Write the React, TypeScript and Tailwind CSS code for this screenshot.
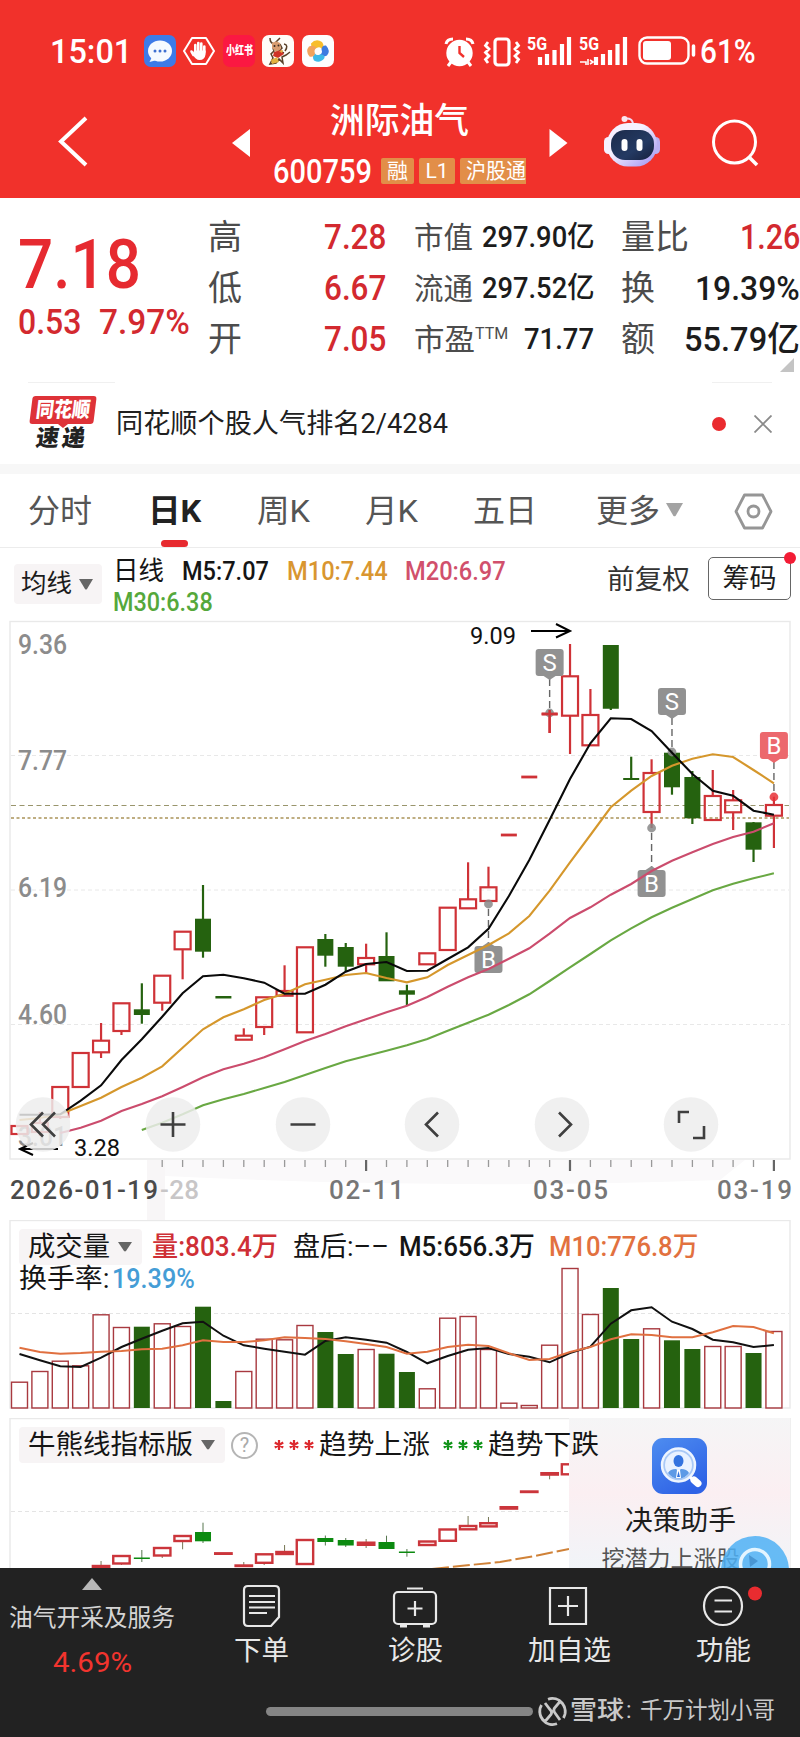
import React, { useLayoutEffect, useRef, useState } from "react";

/* Text squeezed or stretched horizontally to the width of its box. */
function Fit({ className = "", children }: { className?: string; children: React.ReactNode }) {
  const outer = useRef<HTMLSpanElement>(null);
  const inner = useRef<HTMLSpanElement>(null);
  const [k, setK] = useState(1);
  useLayoutEffect(() => {
    if (outer.current && inner.current) setK(outer.current.clientWidth / inner.current.offsetWidth);
  }, []);
  return (
    <span ref={outer} className={"block shrink-0 whitespace-nowrap " + className}>
      <span ref={inner} className="inline-block origin-left" style={{ transform: `scaleX(${k})` }}>
        {children}
      </span>
    </span>
  );
}

const X = (i: number) => 19.5 + 20.39 * i;
const line = (ys: number[], from = 0) => ys.map((y, i) => `${X(i + from).toFixed(1)},${y}`).join(" ");

type Candle = [i: number, color: "r" | "g", top: number, bottom: number, high?: number, low?: number];

const daily: Candle[] = [
  [0, "r", 1126, 1134], [1, "r", 1123, 1132, 1112, 1136], [2, "r", 1087, 1117, 1087, 1119], [3, "r", 1053, 1087],
  [4, "r", 1040.7, 1052.3, 1023, 1058], [5, "r", 1003.3, 1031, 1003, 1035], [6, "g", 1009.3, 1015, 983.3, 1023.7],
  [7, "r", 975.7, 1002.7, 975, 1010.7], [8, "r", 931.7, 949.3, 931, 979.3], [9, "g", 918.7, 951.7, 885, 957.7],
  [10, "g", 996, 998.5], [11, "r", 1035.7, 1039.7, 1028.3, 1040], [12, "r", 997.3, 1027, 997, 1035],
  [13, "r", 991, 995.7, 965.3, 996], [14, "r", 947.3, 1032.3], [15, "g", 939, 955.7, 934, 966.7],
  [16, "g", 947, 966.7, 943, 971.7], [17, "r", 958, 964.3, 943.7, 973], [18, "g", 956, 981.3, 932.3, 981],
  [19, "g", 990.3, 994.7, 984.7, 1005], [20, "r", 953.3, 964.3], [21, "r", 907.7, 950], [22, "r", 899.3, 908.3, 862.3, 908],
  [23, "r", 887.3, 901, 866.7, 901], [24, "r", 835, 835], [25, "r", 777, 777], [26, "r", 714, 714, 710, 733],
  [27, "r", 676.3, 715.7, 644, 754], [28, "r", 715, 745.3, 689, 745], [29, "g", 645, 708.7, 645, 710],
  [30, "g", 778, 780, 756.7, 779], [31, "r", 773, 812, 759.3, 828], [32, "g", 752.7, 787.3, 750, 794.7],
  [33, "g", 777, 818.3, 771, 824], [34, "r", 796, 820, 770, 820], [35, "r", 800.3, 812.3, 790, 830],
  [36, "g", 822.3, 849.7, 822, 862], [37, "r", 805, 815.7, 796.7, 848],
];

const ma5 = [1114.7, 1114.7, 1114.3, 1100.7, 1085.3, 1060, 1039.3, 1016.7, 993.3, 976.3, 974.7, 978.3, 982.7, 993.7, 993.7, 984.7, 971.7, 964, 962, 971, 970.7, 959, 947.3, 928.7, 896, 860, 820, 779, 743.3, 718.3, 719, 731, 752.7, 774, 790.7, 795.7, 810.7, 814.7];
const ma10 = [1120, 1118, 1114.3, 1106, 1097.7, 1087, 1077.7, 1066.3, 1047.7, 1029.3, 1017.3, 1009.3, 1000, 993.7, 984.3, 979.7, 975, 973, 978, 982.3, 977.3, 965, 955, 945, 933.3, 916, 890.7, 862.3, 835, 807.3, 790.7, 776, 765.7, 758.7, 754.3, 757, 770, 783.3];
const ma20 = [1133, 1127.7, 1120.7, 1111, 1104, 1096.3, 1087, 1077.3, 1069.3, 1063.7, 1057.3, 1049.3, 1041, 1034, 1026.3, 1019.3, 1012.3, 1005.7, 997, 986.7, 977.3, 969, 958.7, 948.3, 933.7, 918, 907.3, 894.7, 884, 871, 860.7, 852.3, 844, 837, 831.7, 823.3];
const ma30 = [1130, 1122.7, 1114.3, 1105.3, 1099.3, 1094, 1088, 1082, 1075, 1068, 1061.3, 1056, 1050.7, 1045.3, 1039, 1030.7, 1022.7, 1014.7, 1005, 994.3, 981, 967.3, 954, 940.3, 928.3, 917.3, 907.7, 899, 890.3, 883.7, 878.3, 873.3];

const volTop = [1381.7, 1371, 1360.7, 1365.3, 1314.3, 1327, 1326.7, 1323.3, 1326, 1306.7, 1401, 1371, 1338.7, 1339.3, 1325, 1332, 1354, 1349, 1353.7, 1372, 1388.3, 1317.7, 1316, 1349, 1402.7, 1405, 1344.7, 1268, 1314, 1288, 1339, 1328.3, 1340.3, 1349, 1346, 1346, 1353, 1331];
const volGreen = [6, 9, 10, 15, 16, 18, 19, 29, 30, 32, 33, 36];
const vol5 = [1354, 1360.3, 1366.3, 1367, 1357.7, 1347, 1338.7, 1330.7, 1323.3, 1321.7, 1335.7, 1345.3, 1348.7, 1351.7, 1354.7, 1341, 1337.3, 1339.7, 1342.7, 1352, 1363.3, 1356, 1349.7, 1348, 1354, 1356.7, 1362.3, 1353, 1346.7, 1323.7, 1310.3, 1307.3, 1321.7, 1329, 1339.7, 1342.3, 1347, 1345];
const vol10 = [1347.7, 1352, 1353.7, 1353, 1351.7, 1351, 1349.3, 1348.7, 1345.3, 1340.3, 1342, 1342, 1340.3, 1337.3, 1338, 1339, 1341.3, 1344, 1347, 1353.7, 1351.7, 1347, 1344.7, 1346, 1353.3, 1360, 1359, 1352, 1347, 1339.3, 1334.3, 1335, 1337.3, 1337.3, 1332.3, 1326, 1327, 1333.3];

const trend: Candle[] = [
  [4, "r", 1566, 1568, 1561, 1568], [5, "r", 1556, 1563.5, 1555, 1565], [6, "g", 1557.5, 1559, 1550, 1562],
  [7, "r", 1548, 1555.5, 1547, 1558], [8, "r", 1536, 1541, 1536, 1549.3], [9, "g", 1532, 1541.3, 1522.7, 1543],
  [10, "r", 1553.3, 1553.3], [11, "r", 1565.5, 1566, 1562, 1566], [12, "r", 1554.3, 1562.8, 1554, 1565],
  [13, "r", 1552, 1554, 1545, 1554], [14, "r", 1540, 1564], [15, "g", 1538, 1542, 1535.5, 1545.5],
  [16, "g", 1540, 1545.5, 1538, 1547], [17, "r", 1542.7, 1544.8, 1539, 1548], [18, "g", 1542, 1549, 1535.7, 1549],
  [19, "g", 1551.5, 1553, 1549, 1556.7], [20, "r", 1541.5, 1545], [21, "r", 1529.5, 1540.8], [22, "r", 1526, 1529.3, 1516, 1529],
  [23, "r", 1523.2, 1526.4, 1517, 1526], [24, "r", 1507.2, 1508.6], [25, "r", 1491.5, 1491.8], [26, "r", 1473.2, 1474.6, 1473, 1479.3],
  [27, "r", 1464.3, 1474.3],
];

function Candles({ data }: { data: Candle[] }) {
  return (
    <g strokeWidth="2.2">
      {data.map(([i, c, t, b, h, l]) => {
        const x = X(i);
        if (c === "g")
          return (
            <g key={i} stroke="#25620f" fill="#25620f">
              {h !== undefined && <path d={`M${x} ${h}V${l}`} />}
              <path stroke="none" d={`M${x - 8} ${t}H${x + 8}V${b}H${x - 8}Z`} />
            </g>
          );
        return (
          <g key={i} stroke="#cf3237" fill="none">
            {h !== undefined && h < t && <path d={`M${x} ${h}V${t}`} />}
            {l !== undefined && l > b && <path d={`M${x} ${b}V${l}`} />}
            {b - t < 1 ? <path d={`M${x - 8} ${t}H${x + 8}`} strokeWidth="2.8" /> : <rect x={x - 8} y={t} width="16" height={b - t} />}
          </g>
        );
      })}
    </g>
  );
}

function Marker({ i, y, label, dot, red }: { i: number; y: number; label: string; dot: number; red?: boolean }) {
  const x = X(i);
  const up = dot < y;
  return (
    <g>
      <path d={up ? `M${x} ${dot + 5}V${y - 2}` : `M${x} ${y + 30}V${dot - 2}`} stroke="#666" strokeWidth="1.4" strokeDasharray="7 4" />
      <circle cx={x} cy={dot} r="4.4" fill={red ? "#e83338" : "#888"} opacity="0.85" />
      <rect x={x - 14} y={y} width="28" height="27" rx="3" fill={red ? "#ec686d" : "#919191"} />
      <path d={up ? `M${x - 6} ${y}L${x} ${y - 4}L${x + 6} ${y}Z` : `M${x - 6} ${y + 27}L${x} ${y + 31}L${x + 6} ${y + 27}Z`} fill={red ? "#ec686d" : "#919191"} />
      <text x={x} y={y + 22} fontSize="24" fill="#fff" textAnchor="middle">{label}</text>
    </g>
  );
}

function KChart() {
  return (
    <svg className="block h-[600px] w-full shrink-0" viewBox="0 620 800 600" fill="none">
      <path d="M147 1160h18v60h-18z" fill="#f8f6f7" />
      <path d="M165 1160H745L720 1180Q450 1190 165 1176Z" fill="#faf9fa" />
      <rect x="10" y="621.5" width="780" height="537.5" stroke="#e9e9e9" strokeWidth="1.4" />
      <path d="M11 755.5H789M11 890H789M11 1024.5H789" stroke="#e8e8e8" strokeDasharray="4 3" />
      <path d="M11 805.5H789" stroke="#99956c" strokeWidth="1.2" strokeDasharray="5 3.5" />
      <path d="M11 818H789" stroke="#ab945a" strokeWidth="1.6" strokeDasharray="3 2.5" />
      <g fontSize="27" fill="#8c8c8c" fontWeight="500">
        <text x="18" y="654" textLength="49" lengthAdjust="spacingAndGlyphs">9.36</text>
        <text x="18" y="770" textLength="49" lengthAdjust="spacingAndGlyphs">7.77</text>
        <text x="18" y="897" textLength="49" lengthAdjust="spacingAndGlyphs">6.19</text>
        <text x="18" y="1024" textLength="49" lengthAdjust="spacingAndGlyphs">4.60</text>
        <text x="18" y="1146" textLength="49" lengthAdjust="spacingAndGlyphs">3.01</text>
      </g>
      <Candles data={daily} />
      <Marker i={26} y={649} label="S" dot={713} />
      <Marker i={32} y={688} label="S" dot={752} />
      <Marker i={23} y={946} label="B" dot={904} />
      <Marker i={31} y={870} label="B" dot={828} />
      <Marker i={37} y={732} label="B" dot={797} red />
      <path d={`M${X(26) - 8} 714H${X(26) + 8}M${X(26)} 710V733`} stroke="#cf3237" strokeWidth="2.4" />
      <g strokeWidth="2.1">
        <polyline points={line(ma30, 6)} stroke="#69a843" />
        <polyline points={line(ma20, 2)} stroke="#cb4c6d" />
        <polyline points={line(ma10)} stroke="#d5972c" />
        <polyline points={line(ma5)} stroke="#0a0a0a" />
      </g>
      <path d="M531 631H568M556 624L570 631L556 637.5" stroke="#000" strokeWidth="2" />
      <path d="M58 1149H22M33 1143L20 1149L33 1155" stroke="#000" strokeWidth="2" />
      <g fontSize="24.5" fill="#111">
        <text x="470" y="644" textLength="46" lengthAdjust="spacingAndGlyphs">9.09</text>
        <text x="74" y="1156" textLength="46" lengthAdjust="spacingAndGlyphs">3.28</text>
      </g>
      {[43, 173, 303, 432, 562, 691].map((x) => (
        <circle key={x} cx={x} cy="1124.5" r="27.3" fill="#ededed" opacity="0.84" />
      ))}
      <g stroke="#3f3f3f" strokeWidth="2.6">
        <path d="M43 1112.5L31 1124.5L43 1136.5M55 1112.5L43 1124.5L55 1136.5" />
        <path d="M160.500 1124.500H185.500M173 1112V1137M290.500 1124.500H315.500" />
        <path d="M438 1112.500L426 1124.500L438 1136.500M559 1112.500L571 1124.500L559 1136.500" />
        <path d="M679 1123V1112H689M704 1126V1138H693" />
      </g>
      <path d={Array.from({ length: 31 }, (_, k) => `M${X(k + 7).toFixed(1)} 1160V1167`).join("")} stroke="#999" strokeWidth="1.3" />
      <path d={[17, 27, 37].map((k) => `M${X(k).toFixed(1)} 1160V1171`).join("")} stroke="#666" strokeWidth="2.2" />
      <g fontSize="26" fill="#777" fontWeight="500">
        <text x="10" y="1199" fill="#4a4a4a" textLength="148" lengthAdjust="spacing">2026-01-19</text>
        <text x="160" y="1199" fill="#c8c6c7" textLength="39" lengthAdjust="spacing">-28</text>
        <text x="329" y="1199" textLength="75" lengthAdjust="spacing">02-11</text>
        <text x="533" y="1199" textLength="75" lengthAdjust="spacing">03-05</text>
        <text x="717" y="1199" textLength="75" lengthAdjust="spacing">03-19</text>
      </g>
    </svg>
  );
}

function VolumeChart() {
  return (
    <svg className="absolute inset-0 h-full w-full" viewBox="0 1220 800 198" fill="none">
      <rect x="10" y="1220.500" width="780" height="187.500" stroke="#e9e9e9" strokeWidth="1.4" />
      <path d="M11 1313.500H789" stroke="#e4e4e4" strokeDasharray="4 3" />
      {volTop.map((t, i) =>
        volGreen.includes(i) ? (
          <rect key={i} x={X(i) - 8} y={t} width="16" height={1408 - t} fill="#25620f" />
        ) : (
          <rect key={i} x={X(i) - 8} y={t + 0.5} width="16" height={1407.5 - t} stroke="#a8393f" strokeWidth="1.4" />
        )
      )}
      <polyline points={line(vol5)} stroke="#111" strokeWidth="2" />
      <polyline points={line(vol10)} stroke="#e07040" strokeWidth="2" />
    </svg>
  );
}

function TrendChart() {
  return (
    <svg className="absolute inset-0 h-full w-full" viewBox="0 1418 800 150" fill="none">
      <path d="M10 1568V1418.500H790V1568" stroke="#e9e9e9" strokeWidth="1.4" />
      <path d="M11 1511.500H569" stroke="#e4e4e4" strokeDasharray="4 3" />
      <svg x="0" y="1418" width="569" height="150" viewBox="0 1418 569 150">
        {trend.map(([i, c, t, b, h, l]) => {
          const x = X(i);
          return (
            <g key={i}>
              {h !== undefined && c === "g" && <path d={`M${x} ${h}V${l}`} stroke="#56764f" />}
              {h !== undefined && c === "r" && <path d={`M${x} ${h}V${t}M${x} ${b}V${l}`} stroke="#775" />}
              {c === "g" ? (
                <rect x={x - 8} y={t} width="16" height={b - t} fill="#0c8a10" />
              ) : (
                <rect x={x - 8.2} y={t} width="16.400" height={Math.max(b - t, 0.5)} stroke="#cb353b" strokeWidth="2.4" />
              )}
            </g>
          );
        })}
        <path d="M432 1569L460 1566L500 1562L535 1556L569 1549" stroke="#d08238" strokeWidth="2" strokeDasharray="17 4" />
      </svg>
    </svg>
  );
}

function Down({ className }: { className: string }) {
  return (
    <svg className={"shrink-0 " + className} viewBox="0 0 14 11" preserveAspectRatio="none" fill="currentColor">
      <path d="M0 0H14L8 10Q7 11 6 10Z" />
    </svg>
  );
}

function StatusBar() {
  return (
    <div className="flex h-[102px] shrink-0 items-center text-white">
      <Fit className="ml-[50px] w-[82px] text-[34px] leading-[34px] font-medium">15:01</Fit>
      <svg className="ml-[12px] size-8 shrink-0" viewBox="0 0 32 32">
        <rect width="32" height="32" rx="7" fill="#3d7be8" />
        <ellipse cx="16" cy="16" rx="12" ry="10.500" fill="#f5faff" />
        <path d="M8 22L5.500 27L13 25Z" fill="#f5faff" />
        <g fill="#3d6fd0"><circle cx="11" cy="16" r="1.500" /><circle cx="16" cy="16" r="1.500" /><circle cx="21" cy="16" r="1.500" /></g>
      </svg>
      <svg className="ml-[7px] size-8 shrink-0" viewBox="0 0 32 32">
        <path d="M9 3H23L31 16L23 29H9L1 16Z" fill="none" stroke="#fff" strokeWidth="2" strokeLinejoin="round" />
        <g fill="none" stroke="#fff" strokeWidth="2.600" strokeLinecap="round"><path d="M12.300 17V10M15.300 16V8M18.300 16V8.500M21.300 17V11.500M10.500 20L8.500 16.500" /></g>
        <path d="M11 15.500H22.600V19Q22 25 16.500 25Q12.500 25 9.500 19Z" fill="#fff" />
      </svg>
      <div className="ml-2 flex size-8 shrink-0 items-center justify-center rounded-[7px] bg-[#fb1842]">
        <Fit className="w-[27px] text-[12px] leading-[14px] font-black">小红书</Fit>
      </div>
      <svg className="ml-[7px] size-8 shrink-0" viewBox="0 0 32 32">
        <rect width="32" height="32" rx="7" fill="#fffdf8" />
        <path d="M8 3Q8 8 12 9Q10 12 12 16L9 19L11 23L8 29L14 28L17 24L21 28L20 22L24 20L28 17M12 9Q16 5 18 3M18 9L20 13L17 16L22 18M22 9Q27 10 23 16" fill="none" stroke="#584027" strokeWidth="1.500" />
        <path d="M10 8Q14 5 18 8L19 14L14 17L10 13Z" fill="#d99d70" />
        <path d="M12 17L19 15L22 19L16 23L11 21Z" fill="#cf3328" />
        <path d="M9 25L15 22L17 27L10 29ZM17 16L21 15L20 18Z" fill="#e3b23f" />
        <g fill="#3b2c22"><circle cx="12.500" cy="11" r="1" /><circle cx="16.500" cy="10.500" r="1" /></g>
      </svg>
      <svg className="ml-2 size-8 shrink-0" viewBox="0 0 32 32">
        <rect width="32" height="32" rx="7" fill="#fdfdfd" />
        <path d="M9 8.500Q14 3 20 7Q23 11 20 14Q18 11 14.500 13Q9 14 9 8.500Z" fill="#f8bd2c" />
        <path d="M24 10.500Q29 16 25 20.500Q20 23 18 19.500Q21 18 19.500 14.500Q20 10 24 10.500Z" fill="#3d7be0" />
        <path d="M22.500 23Q18 29 12 25.500Q9.500 21 13 18.500Q14.500 21 18 19.500Q23 19 22.500 23Z" fill="#3db9e8" />
        <path d="M7.500 21.500Q3 16 7 11.500Q12 9.500 14.500 13Q11.500 14.500 13 18.500Q12 22.500 7.500 21.500Z" fill="#f2a35c" />
      </svg>
      <svg className="ml-[111px] h-[32px] w-[252px] shrink-0 overflow-visible" viewBox="445 35 252 32" fill="none" stroke="#fff">
        <circle cx="459.500" cy="53" r="12.200" fill="#fff" strokeWidth="2" />
        <path d="M446 44Q447 39 453 39M473 44Q472 39 466 39M451 62L448 66M468 62L471 66" strokeWidth="3" />
        <path d="M459.500 46V53L464 57" stroke="#f1312b" strokeWidth="2.400" />
        <rect x="495" y="39" width="14" height="26" rx="3" strokeWidth="3.200" />
        <path d="M488 42L485.500 45.500L489 49L485.500 52.500L489 56L485.500 59.500L488 63M516 42L518.500 45.500L515 49L518.500 52.500L515 56L518.500 59.500L516 63" strokeWidth="2.800" />
        <path d="M540 57V65M547 54V65M554.500 50V65M562 44V65M569 37V65M596 57V65M603 54V65M610 50V65M617.500 44V65M625 37V65" strokeWidth="4.200" />
        <path d="M580 62H586V65M588 59V65M590 60L593 62L590 64" strokeWidth="1.600" />
        <g stroke="none" fill="#fff" fontSize="18" fontWeight="700">
          <text x="527" y="50" textLength="20" lengthAdjust="spacingAndGlyphs">5G</text>
          <text x="579" y="50" textLength="20" lengthAdjust="spacingAndGlyphs">5G</text>
        </g>
        <rect x="639.500" y="37.500" width="49" height="26" rx="7.500" strokeWidth="2.400" />
        <rect x="643" y="41" width="28" height="19" rx="3" fill="#fff" stroke="none" />
        <path d="M693.500 46V55" strokeWidth="3.500" strokeLinecap="round" />
      </svg>
      <Fit className="ml-[3px] w-[56px] text-[34px] leading-[34px] font-medium">61%</Fit>
    </div>
  );
}

function Header() {
  return (
    <div className="flex h-[96px] shrink-0 items-start text-white">
      <svg className="mt-[13px] ml-[57px] h-[52px] w-[34px] shrink-0" viewBox="57 115 34 52" fill="none" stroke="#fff" strokeWidth="4">
        <path d="M86 118L61 141.500L86 165" />
      </svg>
      <svg className="mt-[27px] ml-[141px] h-7 w-[18px] shrink-0" viewBox="0 0 18 28" fill="#fff"><path d="M18 0V28L0 14Z" /></svg>
      <div className="ml-[23px] flex w-[256px] shrink-0 flex-col">
        <Fit className="ml-[57px] w-[139px] text-[35px] leading-[40px] font-medium">洲际油气</Fit>
        <div className="mt-[13px] flex h-[32px] items-center">
          <Fit className="w-[99px] text-[34px] leading-[34px] font-medium">600759</Fit>
          <span className="ml-[9px] flex h-[26px] w-[33px] items-center justify-center rounded-[2px] bg-[#e28e48] text-[21px] leading-[24px]">融</span>
          <span className="ml-[5px] flex h-[26px] w-[36px] items-center justify-center rounded-[2px] bg-[#e28e48] text-[21px] leading-[24px]">L1</span>
          <span className="ml-[5px] flex h-[26px] w-[66px] items-center overflow-hidden rounded-l-[2px] bg-[#e28e48] pl-[6px]">
            <Fit className="w-[60px] text-[21px] leading-[24px]">沪股通</Fit>
          </span>
        </div>
      </div>
      <svg className="mt-[27px] ml-[20px] h-7 w-[19px] shrink-0" viewBox="0 0 18 28" fill="#fff"><path d="M0 0V28L18 14Z" /></svg>
      <svg className="mt-[12px] ml-[34px] h-[56px] w-[60px] shrink-0" viewBox="602 114 60 56">
        <defs>
          <linearGradient id="shell" x1="0" y1="0" x2="1" y2="1"><stop offset="0.400" stopColor="#f6f1ff" /><stop offset="1" stopColor="#9b8df0" /></linearGradient>
          <linearGradient id="visor" x1="0" y1="0" x2="1" y2="1"><stop offset="0" stopColor="#1c2b4a" /><stop offset="0.600" stopColor="#243a63" /><stop offset="1" stopColor="#17203c" /></linearGradient>
        </defs>
        <path d="M624 119Q633 117 633 125" fill="none" stroke="#f0dcf5" strokeWidth="2" />
        <circle cx="624.500" cy="119" r="3" fill="#fbe6f0" />
        <rect x="604" y="137" width="9" height="17" rx="4.500" fill="#f6f1ff" />
        <rect x="651" y="137" width="9" height="17" rx="4.500" fill="#b9b0f4" />
        <rect x="607" y="123" width="50" height="43.500" rx="21" fill="url(#shell)" />
        <rect x="611" y="130" width="43" height="30" rx="14" fill="url(#visor)" />
        <rect x="621.500" y="139" width="6" height="12" rx="3" fill="#fff" />
        <rect x="636.500" y="139" width="6" height="12" rx="3" fill="#fff" />
      </svg>
      <svg className="mt-[16px] ml-[48px] h-[50px] w-[50px] shrink-0" viewBox="710 118 50 50" fill="none" stroke="#fff" strokeWidth="3">
        <circle cx="734.500" cy="142" r="21" /><path d="M749 157L757 165" strokeWidth="3.500" />
      </svg>
    </div>
  );
}

const red = "text-[#d3292f] font-medium";

function Stats() {
  return (
    <div className="flex h-[184px] shrink-0 items-start pt-[14px] text-[#4c4c4c]">
      <div className="flex w-[208px] shrink-0 flex-col pl-[18px]">
        <Fit className="mt-[18px] w-[123px] text-[69px] leading-[70px] font-medium text-[#e62a30]">7.18</Fit>
        <div className={"mt-[4px] flex text-[34.5px] leading-[36px] " + red}>
          <Fit className="w-[63px]">0.53</Fit>
          <Fit className="ml-[18px] w-[91px]">7.97%</Fit>
        </div>
      </div>
      <div className="flex w-[178px] shrink-0 flex-col text-[34px] leading-[51px]">
        {[["高", "7.28"], ["低", "6.67"], ["开", "7.05"]].map(([k, v]) => (
          <div key={k} className="flex justify-between">
            <span>{k}</span>
            <Fit className={"w-[62px] text-[34.5px] " + red}>{v}</Fit>
          </div>
        ))}
      </div>
      <div className="ml-[28px] flex w-[180px] shrink-0 flex-col text-[30px] leading-[51px]">
        <div className="flex justify-between"><Fit className="w-[59px]">市值</Fit><Fit className="w-[112px] text-[29px] font-medium text-[#1c1c1c]">297.90亿</Fit></div>
        <div className="flex justify-between"><Fit className="w-[59px]">流通</Fit><Fit className="w-[112px] text-[29px] font-medium text-[#1c1c1c]">297.52亿</Fit></div>
        <div className="flex">
          <Fit className="w-[61px]">市盈</Fit>
          <Fit className="-mt-[6px] w-[33px] text-[16px]">TTM</Fit>
          <Fit className="ml-[16px] w-[70px] text-[29px] font-medium text-[#1c1c1c]">71.77</Fit>
        </div>
      </div>
      <div className="ml-[27px] flex w-[179px] shrink-0 flex-col text-[34px] leading-[51px]">
        <div className="flex justify-between"><span>量比</span><Fit className={"w-[60px] text-[34.5px] " + red}>1.26</Fit></div>
        <div className="flex justify-between"><span>换</span><Fit className="w-[105px] text-[34px] font-medium text-[#1c1c1c]">19.39%</Fit></div>
        <div className="flex justify-between"><span>额</span><Fit className="w-[116px] text-[34px] font-medium text-[#1c1c1c]">55.79亿</Fit></div>
        <svg className="-mt-[7px] mr-[6px] size-[14px] self-end" viewBox="0 0 14 14" fill="#c4c4c4"><path d="M14 0V14H0Z" /></svg>
      </div>
    </div>
  );
}

function News() {
  return (
    <div className="flex h-[82px] shrink-0 flex-col">
      <div className="flex h-px justify-between pr-[28px] pl-[28px]"><i className="w-[87px] bg-[#f0f0f0]" /><i className="w-[60px] bg-[#f0f0f0]" /></div>
      <div className="flex h-[81px] items-center">
        <div className="ml-[28px] flex h-[60px] w-[69px] shrink-0 flex-col items-center pt-[2px]">
          <div className="flex h-[28px] w-[64px] -skew-x-[7deg] items-center justify-center rounded-[3px] bg-[#de3238]">
            <Fit className="w-[54px] text-[21px] leading-[28px] font-black text-white">同花顺</Fit>
          </div>
          <svg className="h-[4px] w-[10px] shrink-0" viewBox="0 0 10 4" fill="#de3238"><path d="M0 0H10L5 4Z" /></svg>
          <div className="-ml-[4px] flex -skew-x-[8deg] gap-[3px] text-[23px] leading-[22px] font-black text-[#222]"><span>速</span><span>递</span></div>
        </div>
        <Fit className="ml-[19px] w-[332px] text-[27px] leading-[40px] text-[#202020]">同花顺个股人气排名2/4284</Fit>
        <i className="ml-[264px] size-[14px] shrink-0 rounded-full bg-[#ea2b2f]" />
        <svg className="ml-[28px] size-[18px] shrink-0" viewBox="0 0 18 18" stroke="#8a8a8a" strokeWidth="1.800"><path d="M0.500 0.500L17.500 17.500M17.500 0.500L0.500 17.500" /></svg>
      </div>
    </div>
  );
}

function Tabs() {
  return (
    <div className="flex h-[74px] shrink-0 border-b border-[#ececec] text-[32px] leading-[75px] text-[#555]">
      <Fit className="ml-[28px] w-[64px]">分时</Fit>
      <div className="ml-[55px] flex w-[54px] shrink-0 flex-col items-center">
        <Fit className="h-[66px] w-[53px] text-[32px] font-bold text-[#222]">日K</Fit>
        <i className="h-[7px] w-[27px] shrink-0 rounded-full bg-[#e72a2f]" />
      </div>
      <Fit className="ml-[56px] w-[53px]">周K</Fit>
      <Fit className="ml-[55px] w-[53px]">月K</Fit>
      <Fit className="ml-[55px] w-[64px]">五日</Fit>
      <Fit className="ml-[59px] w-[64px]">更多</Fit>
      <Down className="mt-[29px] ml-[6px] h-[14px] w-[17px] text-[#a3a3a3]" />
      <svg className="mt-[19px] ml-[51px] h-[37px] w-[39px] shrink-0" viewBox="0 0 39 37" fill="none" stroke="#969696" strokeWidth="2.800" strokeLinejoin="round">
        <path d="M10.500 2H28.500L37 18.500L28.500 35H10.500L2 18.500Z" /><circle cx="19.500" cy="18.500" r="5.500" />
      </svg>
    </div>
  );
}

function MaLegend() {
  return (
    <div className="flex h-[72px] shrink-0 items-start">
      <div className="mt-[16px] ml-[14px] flex h-[40px] w-[88px] shrink-0 items-center rounded-[4px] bg-[#f7f4f5] pl-[7px] text-[#1c1c1c]">
        <Fit className="w-[51px] text-[25px] leading-[38px]">均线</Fit>
        <Down className="ml-[7px] h-[11px] w-[14px] text-[#666]" />
      </div>
      <div className="ml-[11px] flex w-[494px] shrink-0 flex-col text-[26px] leading-[31px]">
        <div className="mt-[8px] flex">
          <Fit className="w-[51px] text-[#151515]">日线</Fit>
          <Fit className="ml-[18px] w-[87px] font-medium text-[#151515]">M5:7.07</Fit>
          <Fit className="ml-[18px] w-[101px] font-medium text-[#d99630]">M10:7.44</Fit>
          <Fit className="ml-[17px] w-[101px] font-medium text-[#d1506c]">M20:6.97</Fit>
        </div>
        <Fit className="w-[100px] font-medium text-[#55a83b]">M30:6.38</Fit>
      </div>
      <Fit className="mt-[12px] w-[83px] text-[27px] leading-[40px] text-[#333]">前复权</Fit>
      <div className="relative mt-[9px] ml-[18px] flex h-[43px] w-[83px] shrink-0 items-center justify-center rounded-[5px] border border-[#666] text-[#1c1c1c]">
        <Fit className="w-[54px] text-[27px] leading-[40px]">筹码</Fit>
        <i className="absolute -top-[6px] -right-[6px] size-[12px] rounded-full bg-[#f31c35]" />
      </div>
    </div>
  );
}

function VolumePanel() {
  return (
    <div className="relative h-[198px] shrink-0">
      <VolumeChart />
      <div className="relative flex flex-col pt-[9px] pl-[19px] text-[27px] text-[#151515]">
        <div className="flex h-[36px] items-center leading-[36px]">
          <div className="flex h-[36px] w-[123px] shrink-0 items-center rounded-[4px] bg-[#f7f4f5] pl-[9px]">
            <Fit className="w-[82px]">成交量</Fit>
            <Down className="ml-[8px] h-[10px] w-[14px] text-[#666]" />
          </div>
          <Fit className="ml-[10px] w-[126px] font-medium text-[#cf2f36]">量:803.4万</Fit>
          <Fit className="ml-[15px] w-[96px]">盘后:&#8211;&#8211;</Fit>
          <Fit className="ml-[10px] w-[136px] font-medium">M5:656.3万</Fit>
          <Fit className="ml-[14px] w-[149px] font-medium text-[#e2713f]">M10:776.8万</Fit>
        </div>
        <div className="-mt-[1px] flex leading-[30px]">
          <Fit className="w-[91px]">换手率:</Fit>
          <Fit className="ml-[2px] w-[83px] font-medium text-[#459dd6]">19.39%</Fit>
        </div>
      </div>
    </div>
  );
}

function TrendPanel() {
  return (
    <div className="relative h-[150px] shrink-0 overflow-hidden">
      <TrendChart />
      <div className="absolute top-0 right-[10px] flex h-[150px] w-[221px] flex-col items-center bg-linear-to-b from-[#f5f5f6] via-[#fbeff2] via-50% to-[#f1f4f8]">
        <svg className="mt-[20px] size-[56px] shrink-0" viewBox="0 0 56 56">
          <defs><linearGradient id="blue" x1="0" y1="0" x2="0.600" y2="1"><stop offset="0" stopColor="#4e8df0" /><stop offset="1" stopColor="#2f63e6" /></linearGradient></defs>
          <rect width="55" height="56" rx="11" fill="url(#blue)" />
          <circle cx="26.500" cy="27" r="16.500" fill="#a9c9f6" stroke="#eef5ff" strokeWidth="2.500" />
          <circle cx="26.500" cy="27" r="13.500" fill="#e9f2ff" />
          <ellipse cx="26.500" cy="23" rx="5" ry="6" fill="#3373df" />
          <path d="M16 35Q18 31 24 31L26.500 33L29 31Q35 31 37 35Q33 40.500 26.500 40.500Q20 40.500 16 35Z" fill="#5d9ae6" />
          <path d="M25 32H28L29 40H24Z" fill="#fff" />
          <path d="M26.500 33L28 39H25Z" fill="#3373df" />
          <path d="M38 39L41 42" stroke="#fff" strokeWidth="3" /><path d="M42 42L46 45.500" stroke="#fff" strokeWidth="7" strokeLinecap="round" />
        </svg>
        <Fit className="mt-[9px] ml-[2px] w-[111px] text-[27px] leading-[36px] text-[#1d1d1d]">决策助手</Fit>
        <Fit className="mt-[5px] -ml-[18px] w-[138px] text-[23px] leading-[32px] text-[#555]">挖潜力上涨股</Fit>
      </div>
      <svg className="absolute right-[10px] bottom-0 h-[36px] w-[70px]" viewBox="720 1532 70 36" fill="none">
        <circle cx="755" cy="1570" r="34" fill="#4eb0f4" opacity="0.850" />
        <circle cx="755" cy="1564" r="14.500" stroke="#e4f5ff" strokeWidth="3.500" />
        <path d="M749 1555L758 1561L750 1567Z" fill="#3c86c5" opacity="0.700" />
      </svg>
      <div className="relative mt-[9px] flex h-[36px] items-center pl-[19px] text-[27px] leading-[36px] text-[#151515]">
        <div className="flex h-[36px] w-[206px] shrink-0 items-center rounded-[4px] bg-[#f7f4f5] pl-[9px]">
          <Fit className="w-[165px]">牛熊线指标版</Fit>
          <Down className="ml-[8px] h-[10px] w-[14px] text-[#666]" />
        </div>
        <div className="ml-[6px] flex size-[27px] shrink-0 items-center justify-center rounded-full border-2 border-[#b5b5b5] text-[20px] leading-[22px] text-[#aaa]">?</div>
        <Stars className="ml-[16px] text-[#dc2a2f]" />
        <Fit className="ml-[5px] w-[111px]">趋势上涨</Fit>
        <Stars className="ml-[13px] text-[#12941a]" />
        <Fit className="ml-[5px] w-[111px]">趋势下跌</Fit>
      </div>
    </div>
  );
}

function Stars({ className }: { className: string }) {
  return (
    <svg className={"h-[12px] w-[40px] shrink-0 " + className} viewBox="0 0 40 12" stroke="currentColor" strokeWidth="2.200">
      <path d="M5 1V11M0.800 3.500L9.200 8.500M9.200 3.500L0.800 8.500M20 1V11M15.800 3.500L24.200 8.500M24.200 3.500L15.800 8.500M35 1V11M30.800 3.500L39.200 8.500M39.200 3.500L30.800 8.500" />
    </svg>
  );
}

function BottomBar() {
  return (
    <div className="flex h-[169px] shrink-0 flex-col bg-[#222] text-[#e8e8e8]">
      <div className="flex h-[126px] items-start text-[27px] leading-[36px]">
        <div className="flex w-[184px] shrink-0 flex-col items-center">
          <svg className="mt-[10px] h-[12px] w-[20px]" viewBox="0 0 20 12" fill="#b8b8b8"><path d="M10 0L20 12H0Z" /></svg>
          <Fit className="mt-[11px] w-[166px] text-[24px] leading-[34px] text-[#d4d4d4]">油气开采及服务</Fit>
          <Fit className="mt-[11px] w-[79px] text-[28px] leading-[34px] text-[#f2342e]">4.69%</Fit>
        </div>
        <div className="flex w-[154px] shrink-0 flex-col items-center">
          <svg className="mt-[16px] h-[44px] w-[40px]" viewBox="0 0 40 44" fill="none" stroke="#e8e8e8" strokeWidth="2.200">
            <path d="M7 2H34Q38 2 38 6V33L30 42H7Q3 42 3 38V6Q3 2 7 2Z" /><path d="M8 12H34M8 18H34M8 23.500H34M8 29H26" strokeWidth="2" />
          </svg>
          <Fit className="mt-[5px] w-[55px]">下单</Fit>
        </div>
        <div className="flex w-[154px] shrink-0 flex-col items-center">
          <svg className="mt-[16px] h-[44px] w-[46px]" viewBox="0 0 46 44" fill="none" stroke="#e8e8e8" strokeWidth="2.200">
            <rect x="2" y="8" width="42" height="32" rx="4" /><path d="M15 4.500H31M23 17V32M15.500 24.500H30.500" /><path d="M8 42H15M31 42H38" strokeWidth="3" />
          </svg>
          <Fit className="mt-[5px] w-[55px]">诊股</Fit>
        </div>
        <div className="flex w-[154px] shrink-0 flex-col items-center">
          <svg className="mt-[16px] -ml-[2px] h-[44px] w-[40px]" viewBox="0 0 40 44" fill="none" stroke="#e8e8e8" strokeWidth="2.200">
            <path d="M2 4H38V40H2ZM20 12V32M10 22H30" />
          </svg>
          <Fit className="mt-[5px] w-[83px]">加自选</Fit>
        </div>
        <div className="flex w-[154px] shrink-0 flex-col items-center">
          <svg className="mt-[16px] h-[44px] w-[82px]" viewBox="0 0 82 44" fill="none" stroke="#e8e8e8" strokeWidth="2.200">
            <circle cx="41" cy="22" r="19" /><path d="M32.500 16.500H50M32.500 27.500H50" /><circle cx="73" cy="9.500" r="7" fill="#e92c30" stroke="none" />
          </svg>
          <Fit className="mt-[5px] w-[55px]">功能</Fit>
        </div>
      </div>
      <div className="flex h-[34px] items-center text-[#c9c9c9]">
        <i className="ml-[266px] h-[9px] w-[267px] shrink-0 rounded-full bg-[#858585]" />
        <svg className="ml-[5px] size-[29px] shrink-0" viewBox="0 0 29 29" fill="none" stroke="currentColor" strokeWidth="2.800">
          <path d="M10 2.200A13 13 0 0 1 25.500 21M19 26.800A13 13 0 0 1 3.500 8M2 12A13 13 0 0 0 7 24.500L13 17.500Q14.500 15 12 12.500L7 6M27 17A13 13 0 0 0 22 4.500L16.500 11Q15 13.500 17 16L22 23" />
        </svg>
        <Fit className="ml-[3px] w-[54px] text-[25px] leading-[32px] font-medium">雪球</Fit>
        <Fit className="ml-[2px] w-[6px] text-[23px] leading-[32px]">:</Fit>
        <Fit className="ml-[8px] w-[135px] text-[23px] leading-[32px]">千万计划小哥</Fit>
      </div>
    </div>
  );
}

export default function App() {
  return (
    <main className="flex h-[1737px] w-[800px] flex-col overflow-hidden bg-white font-['Roboto','Noto_Sans_CJK_SC',sans-serif]">
      <header className="flex shrink-0 flex-col bg-[#f1312b]">
        <StatusBar />
        <Header />
      </header>
      <Stats />
      <News />
      <div className="h-[10px] shrink-0 bg-[#f7f7f7]" />
      <Tabs />
      <MaLegend />
      <KChart />
      <VolumePanel />
      <TrendPanel />
      <BottomBar />
    </main>
  );
}
